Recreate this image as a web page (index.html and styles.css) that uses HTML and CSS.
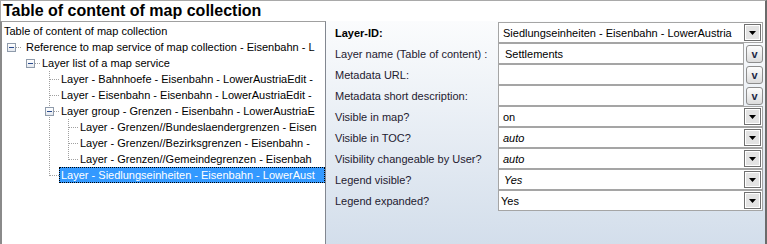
FILE: index.html
```html
<!DOCTYPE html>
<html>
<head>
<meta charset="utf-8">
<link rel="stylesheet" href="styles.css">
</head>
<body>
<div class="frame">
  <div class="title">Table of content of map collection</div>
  <div class="main">
    <div class="tree">
      <div class="row"><span class="txt">Table of content of map collection</span></div>
      <div class="row"><span class="c exp"><span class="box"></span></span><span class="txt l1">Reference to map service of map collection - Eisenbahn - L</span></div>
      <div class="row"><span class="c"></span><span class="c exp"><span class="box"></span></span><span class="txt">Layer list of a map service</span></div>
      <div class="row"><span class="c"></span><span class="c"></span><span class="c tee"></span><span class="txt">Layer - Bahnhoefe - Eisenbahn - LowerAustriaEdit -</span></div>
      <div class="row"><span class="c"></span><span class="c"></span><span class="c tee"></span><span class="txt">Layer - Eisenbahn - Eisenbahn - LowerAustriaEdit -</span></div>
      <div class="row"><span class="c"></span><span class="c"></span><span class="c exp thru"><span class="box"></span></span><span class="txt">Layer group - Grenzen - Eisenbahn - LowerAustriaE</span></div>
      <div class="row"><span class="c"></span><span class="c"></span><span class="c pipe"></span><span class="c tee"></span><span class="txt">Layer - Grenzen//Bundeslaendergrenzen - Eisen</span></div>
      <div class="row"><span class="c"></span><span class="c"></span><span class="c pipe"></span><span class="c tee"></span><span class="txt">Layer - Grenzen//Bezirksgrenzen - Eisenbahn -</span></div>
      <div class="row"><span class="c"></span><span class="c"></span><span class="c pipe"></span><span class="c elbow"></span><span class="txt">Layer - Grenzen//Gemeindegrenzen - Eisenbah</span></div>
      <div class="row"><span class="c"></span><span class="c"></span><span class="c elbow"></span><span class="txt sel">Layer - Siedlungseinheiten - Eisenbahn - LowerAust</span></div>
    </div>
    <div class="panel">
      <div class="props">
        <div class="lbl strong">Layer-ID:</div>
        <div class="combo"><span class="val">Siedlungseinheiten - Eisenbahn - LowerAustria</span><span class="dd"><svg width="7" height="4" viewBox="0 0 7 4"><path d="M0 0h7L3.5 4z" fill="#000"/></svg></span></div>

        <div class="lbl">Layer name (Table of content) :</div>
        <div class="tbrow"><div class="tb"><span class="val pad6">Settlements</span></div><span class="vbtn">v</span></div>

        <div class="lbl">Metadata URL:</div>
        <div class="tbrow"><div class="tb"></div><span class="vbtn">v</span></div>

        <div class="lbl">Metadata short description:</div>
        <div class="tbrow"><div class="tb"></div><span class="vbtn">v</span></div>

        <div class="lbl">Visible in map?</div>
        <div class="combo"><span class="val">on</span><span class="dd"><svg width="7" height="4" viewBox="0 0 7 4"><path d="M0 0h7L3.5 4z" fill="#000"/></svg></span></div>

        <div class="lbl">Visible in TOC?</div>
        <div class="combo"><span class="val it">auto</span><span class="dd"><svg width="7" height="4" viewBox="0 0 7 4"><path d="M0 0h7L3.5 4z" fill="#000"/></svg></span></div>

        <div class="lbl">Visibility changeable by User?</div>
        <div class="combo"><span class="val it">auto</span><span class="dd"><svg width="7" height="4" viewBox="0 0 7 4"><path d="M0 0h7L3.5 4z" fill="#000"/></svg></span></div>

        <div class="lbl">Legend visible?</div>
        <div class="combo"><span class="val it pad5">Yes</span><span class="dd"><svg width="7" height="4" viewBox="0 0 7 4"><path d="M0 0h7L3.5 4z" fill="#000"/></svg></span></div>

        <div class="lbl">Legend expanded?</div>
        <div class="combo"><span class="val pad2">Yes</span><span class="dd"><svg width="7" height="4" viewBox="0 0 7 4"><path d="M0 0h7L3.5 4z" fill="#000"/></svg></span></div>
      </div>
    </div>
  </div>
</div>
</body>
</html>
```
FILE: styles.css
```css
* { box-sizing: border-box; }
html, body { margin: 0; padding: 0; background: #fff; }
body { font-family: "Liberation Sans", Arial, sans-serif; }

.frame {
  width: 767px;
  height: 244px;
  border-top: 1px solid #a9a9a9;
  border-right: 2px solid #6b6b6b;
  overflow: hidden;
  display: flex;
  flex-direction: column;
}

.title {
  height: 20px;
  line-height: 20px;
  font-size: 16px;
  font-weight: bold;
  color: #000;
  padding-left: 2px;
  border-left: 1px solid #a9a9a9;
  background: #fff;
  white-space: nowrap;
}

.main { display: flex; flex: 1; min-height: 0; }

.tree {
  width: 326px;
  flex: none;
  background: #fff;
  border-top: 1px solid #a0a0a0;
  border-left: 2px solid #8a8a8a;
  border-right: 1px solid #828790;
  padding-top: 1px;
  overflow: hidden;
  font-size: 11px;
  color: #000;
}

.row { display: flex; height: 16px; white-space: nowrap; }

.txt { flex: none; line-height: 16px; padding: 0 2px; }
.txt.l1 { margin-left: 3px; }
.txt.sel {
  flex: 1 0 auto;
  background: #3399ff;
  color: #fff;
  border: 1px dotted #000;
  line-height: 14px;
  padding: 0 1px;
}

.c { flex: none; width: 19px; height: 16px; }

.tee {
  background:
    repeating-linear-gradient(to right, #a0a0a0 0 1px, transparent 1px 2px) 10px 8px / 9px 1px no-repeat,
    repeating-linear-gradient(to bottom, #a0a0a0 0 1px, transparent 1px 2px) 9px 0 / 1px 16px no-repeat;
}
.pipe {
  background: repeating-linear-gradient(to bottom, #a0a0a0 0 1px, transparent 1px 2px) 9px 0 / 1px 16px no-repeat;
}
.elbow {
  background:
    repeating-linear-gradient(to right, #a0a0a0 0 1px, transparent 1px 2px) 10px 8px / 9px 1px no-repeat,
    repeating-linear-gradient(to bottom, #a0a0a0 0 1px, transparent 1px 2px) 9px 0 / 1px 9px no-repeat;
}
.exp {
  display: flex;
  padding: 4px 0 0 5px;
  background: repeating-linear-gradient(to right, #a0a0a0 0 1px, transparent 1px 2px) 14px 8px / 5px 1px no-repeat;
}
.exp.thru {
  background:
    repeating-linear-gradient(to right, #a0a0a0 0 1px, transparent 1px 2px) 14px 8px / 5px 1px no-repeat,
    repeating-linear-gradient(to bottom, #a0a0a0 0 1px, transparent 1px 2px) 9px 0 / 1px 16px no-repeat;
}
.box {
  width: 9px;
  height: 9px;
  border: 1px solid #8f9bab;
  background:
    linear-gradient(#2a4b8d, #2a4b8d) center / 5px 1px no-repeat,
    linear-gradient(#ffffff, #e4e8ee);
}

.panel {
  flex: 1;
  background: linear-gradient(#fbfcfd, #d3deeb);
  padding: 1px 2px 0 9px;
}

.props {
  display: grid;
  grid-template-columns: 163px 265px;
  grid-auto-rows: 21px;
  font-size: 11px;
}

.lbl {
  display: flex;
  align-items: center;
  color: #1e2030;
  white-space: nowrap;
}
.lbl.strong { font-weight: bold; color: #000; }

.combo, .tb {
  display: flex;
  align-items: center;
  height: 21px;
  background: #fff;
  border: 1px solid #a5a5a5;
}
.combo { justify-content: space-between; }

.val { padding-left: 4px; white-space: nowrap; color: #000; }
.val.pad6 { padding-left: 6px; }
.val.pad5 { padding-left: 5px; }
.val.pad2 { padding-left: 2px; }
.val.it { font-style: italic; }

.dd {
  width: 17px;
  height: 17px;
  margin-right: 1px;
  display: flex;
  align-items: center;
  justify-content: center;
  border: 1px solid #707070;
  box-shadow: inset 0 0 0 1px #fff;
  background: #e3e3e3;
}

.tbrow { display: flex; gap: 2px; align-items: center; }
.tb { width: 246px; flex: none; }
.vbtn {
  width: 17px;
  height: 18px;
  flex: none;
  display: flex;
  align-items: center;
  justify-content: center;
  border: 1px solid #8d8d8d;
  border-radius: 3px;
  background: linear-gradient(#fdfdfd, #dcdcdc);
  font-weight: bold;
  font-size: 11px;
  color: #1c2745;
}
```
